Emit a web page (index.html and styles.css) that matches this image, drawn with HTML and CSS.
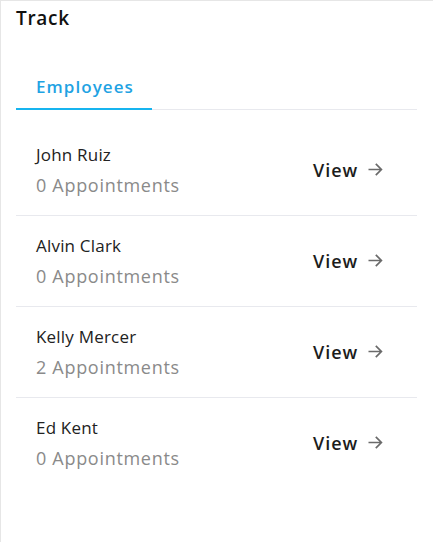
FILE: index.html
```html
<!DOCTYPE html>
<html>
<head>
<meta charset="utf-8">
<link rel="stylesheet" href="styles.css">
</head>
<body>
<div class="card">
  <h1 class="title">Track</h1>
  <div class="tabs">
    <div class="tab active">Employees</div>
  </div>
  <ul class="list">
    <li class="row">
      <div class="info"><div class="name">John Ruiz</div><div class="count">0 Appointments</div></div>
      <a class="view">View <svg class="arrow" viewBox="0 0 15 13" width="15" height="13"><path d="M0.5 6.5H13.5M7.8 0.9L13.4 6.5L7.8 12.1" fill="none" stroke="#6a6a6a" stroke-width="1.7"/></svg></a>
    </li>
    <li class="row">
      <div class="info"><div class="name">Alvin Clark</div><div class="count">0 Appointments</div></div>
      <a class="view">View <svg class="arrow" viewBox="0 0 15 13" width="15" height="13"><path d="M0.5 6.5H13.5M7.8 0.9L13.4 6.5L7.8 12.1" fill="none" stroke="#6a6a6a" stroke-width="1.7"/></svg></a>
    </li>
    <li class="row">
      <div class="info"><div class="name">Kelly Mercer</div><div class="count">2 Appointments</div></div>
      <a class="view">View <svg class="arrow" viewBox="0 0 15 13" width="15" height="13"><path d="M0.5 6.5H13.5M7.8 0.9L13.4 6.5L7.8 12.1" fill="none" stroke="#6a6a6a" stroke-width="1.7"/></svg></a>
    </li>
    <li class="row">
      <div class="info"><div class="name">Ed Kent</div><div class="count">0 Appointments</div></div>
      <a class="view">View <svg class="arrow" viewBox="0 0 15 13" width="15" height="13"><path d="M0.5 6.5H13.5M7.8 0.9L13.4 6.5L7.8 12.1" fill="none" stroke="#6a6a6a" stroke-width="1.7"/></svg></a>
    </li>
  </ul>
</div>
</body>
</html>
```
FILE: styles.css
```css
html, body {
  margin: 0;
  padding: 0;
  background: #fff;
}
body {
  font-family: "Open Sans", "Noto Sans", sans-serif;
  color: #1f1f1f;
}
.card {
  box-sizing: border-box;
  height: 542px;
  border-top: 1px solid #e6e6e6;
  border-left: 1px solid #e6e6e6;
  padding: 0 16px 0 15px;
}
.title {
  margin: 0;
  padding-top: 5px;
  font-size: 19px;
  line-height: 24px;
  font-weight: 600;
  color: #111;
  letter-spacing: 0.7px;
}
.tabs {
  margin-top: 38px;
  display: flex;
  border-bottom: 1px solid #e8e9ee;
}
.tab {
  width: 136px;
  box-sizing: border-box;
  padding: 7px 0 9px 20px;
  font-size: 17px;
  line-height: 24px;
  font-weight: 600;
  color: #1fa3e3;
  letter-spacing: 1.05px;
}
.tab.active {
  border-bottom: 2px solid #16b4ef;
  margin-bottom: -1px;
}
.list {
  list-style: none;
  margin: 0;
  padding: 15px 0 0;
}
.row {
  display: flex;
  align-items: center;
  justify-content: space-between;
  padding: 18px 34px 17px 20px;
  border-bottom: 1px solid #e8e9ee;
}
.row:last-child {
  border-bottom: none;
}
.name {
  font-size: 17px;
  line-height: 24px;
  font-weight: 500;
  color: #222;
  letter-spacing: 0.2px;
}
.count {
  margin-top: 6px;
  font-size: 18px;
  line-height: 25px;
  color: #8a8a8a;
  letter-spacing: 0.7px;
}
.view {
  display: flex;
  align-items: center;
  gap: 10px;
  margin-bottom: 2px;
  font-size: 18px;
  line-height: 24px;
  font-weight: 600;
  color: #1c1c1c;
  letter-spacing: 0.9px;
}
.arrow {
  display: block;
  flex-shrink: 0;
}
```
